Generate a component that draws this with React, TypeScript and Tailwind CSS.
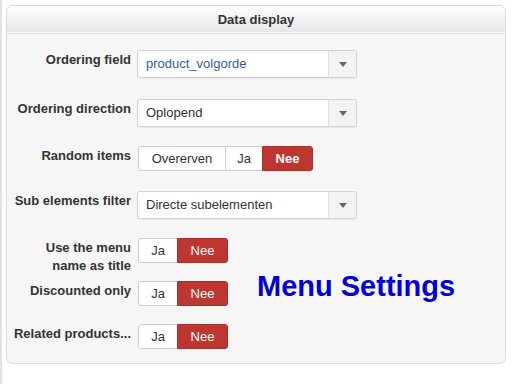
const Caret = () => (
  <svg width="8" height="5" viewBox="0 0 8 5">
    <path d="M0 0h8L4 5z" fill="#666" />
  </svg>
);

interface SelectProps {
  value: string;
  blue?: boolean;
}
const Select = ({ value, blue }: SelectProps) => (
  <div className="flex h-[28px] w-[220px] rounded-[3px] border border-[#d2d2d2] bg-white shadow-[0_1px_1px_rgba(0,0,0,0.06)]">
    <div
      className={`flex flex-1 items-center pl-[8px] text-[13px] ${
        blue ? "text-[#35609a]" : "text-[#333]"
      }`}
    >
      {value}
    </div>
    <div className="flex w-[28px] items-center justify-center rounded-r-[3px] border-l border-[#e0e0e0] bg-[#f3f3f3]">
      <Caret />
    </div>
  </div>
);

interface ToggleProps {
  options: { label: string; w: string }[];
  boldNee?: boolean;
}
const Toggle = ({ options, boldNee }: ToggleProps) => (
  <div className="flex h-[25px] ml-px">
    {options.map((o, i) => {
      const active = o.label === "Nee";
      const first = i === 0;
      const last = i === options.length - 1;
      return (
        <div
          key={o.label}
          className={`flex items-center justify-center text-[13px] border ${o.w} ${
            first ? "rounded-l-[3px]" : "-ml-px"
          } ${last ? "rounded-r-[3px]" : ""} ${
            active
              ? `bg-[#bd362f] border-[#ac2f29] text-white ${boldNee ? "font-bold" : ""}`
              : "bg-white border-[#cfcfcf] text-[#333]"
          }`}
        >
          {o.label}
        </div>
      );
    })}
  </div>
);

const Label = ({ children }: { children: React.ReactNode }) => (
  <div className="w-[124px] shrink-0 pt-px text-right text-[13px] font-bold leading-[18px] text-[#333]">
    {children}
  </div>
);

const jaNee = [
  { label: "Ja", w: "w-[40px]" },
  { label: "Nee", w: "w-[51px]" },
];

export default function App() {
  return (
    <div className="relative h-[384px] w-[512px] border-l-2 border-[#e2e2e2] bg-white pt-[5px] pl-[4px] font-['Liberation_Sans',Arial,sans-serif]">
      <div className="w-[500px] rounded-[6px] border border-[#dcdcdc] bg-[#f6f6f6]">
        <div className="flex h-[28px] items-center justify-center rounded-t-[6px] border-b border-[#dedede] bg-gradient-to-b from-[#fdfdfd] to-[#e6e6e6] text-[13px] font-bold text-[#333] shadow-[inset_0_-1px_0_#fafafa]">
          Data display
        </div>
        <div className="pt-[16px] pb-[14px]">
          <div className="flex items-start gap-[6px]">
            <Label>Ordering field</Label>
            <Select value="product_volgorde" blue />
          </div>
          <div className="mt-[21px] flex items-start gap-[6px]">
            <Label>Ordering direction</Label>
            <Select value="Oplopend" />
          </div>
          <div className="mt-[19px] flex items-start gap-[6px]">
            <Label>Random items</Label>
            <Toggle
              boldNee
              options={[
                { label: "Overerven", w: "w-[88px]" },
                { label: "Ja", w: "w-[38px]" },
                { label: "Nee", w: "w-[51px]" },
              ]}
            />
          </div>
          <div className="mt-[20px] flex items-start gap-[6px]">
            <Label>Sub elements filter</Label>
            <Select value="Directe subelementen" />
          </div>
          <div className="mt-[19px] flex items-start gap-[6px]">
            <Label>
              Use the menu
              <br />
              name as title
            </Label>
            <Toggle options={jaNee} />
          </div>
          <div className="mt-[6px] flex items-start gap-[6px]">
            <Label>Discounted only</Label>
            <Toggle options={jaNee} />
          </div>
          <div className="mt-[18px] flex items-start gap-[6px]">
            <Label>Related products...</Label>
            <Toggle options={jaNee} />
          </div>
        </div>
      </div>
      <div className="absolute left-[255px] top-[272px] text-[29px] font-bold leading-[29px] text-[#0000dc]">
        Menu Settings
      </div>
    </div>
  );
}
